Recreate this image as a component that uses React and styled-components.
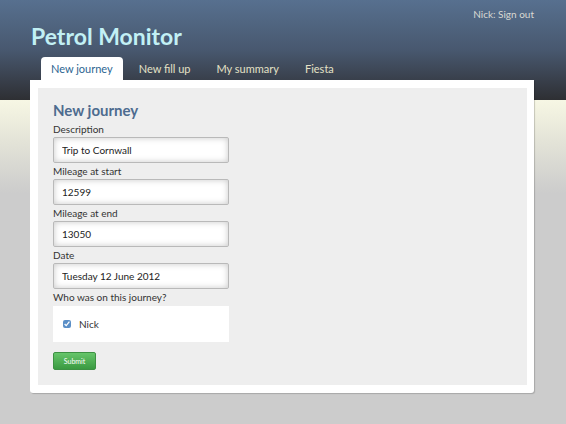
import React from 'react';
import styled, { createGlobalStyle } from 'styled-components';

const GlobalStyle = createGlobalStyle`
  html, body {
    margin: 0;
    padding: 0;
  }
  body {
    min-height: 424px;
    font-family: Lato, "Open Sans", sans-serif;
    color: #333;
    background: linear-gradient(
      to bottom,
      #57708f 0px,
      #48586f 50px,
      #2e2f33 100px,
      #f7f7e4 100px,
      #e4e4d8 140px,
      #cccccc 193px,
      #cccccc 100%
    ) no-repeat;
    background-color: #cccccc;
  }
`;

const Page = styled.div`
  width: 504px;
  margin-left: 30px;
`;

const Header = styled.header`
  height: 80px;
  display: flex;
  flex-direction: column;
`;

const UserBar = styled.div`
  display: flex;
  justify-content: flex-end;
  padding-top: 8px;
  font-size: 10px;
  line-height: 12px;
  color: #d9d9d2;
`;

const Title = styled.h1`
  margin: 2px 0 0 1px;
  font-size: 23px;
  line-height: 28px;
  font-weight: 700;
  color: #c2f0f5;
`;

const Tabs = styled.nav`
  margin-top: auto;
  padding-left: 11px;
  display: flex;
  gap: 6px;
`;

const Tab = styled.a`
  height: 23px;
  padding: 0 10px;
  display: flex;
  align-items: center;
  font-size: 11px;
  color: ${p => (p.$active ? '#2d6591' : '#e4e1c6')};
  background: ${p => (p.$active ? '#ffffff' : 'transparent')};
  border-radius: 4px 4px 0 0;
  text-decoration: none;
  cursor: pointer;
`;

const Card = styled.main`
  background: #ffffff;
  padding: 8px 7px 8px 8px;
  border-radius: 0 0 3px 3px;
  box-shadow: 1px 1px 1px rgba(0, 0, 0, 0.18);
`;

const Panel = styled.section`
  background: #eeeeee;
  padding: 12px 15px 15px;
`;

const Heading = styled.h2`
  margin: 0 0 1px;
  font-size: 15px;
  line-height: 20px;
  font-weight: 700;
  color: #4d6b8f;
`;

const Field = styled.div`
  display: flex;
  flex-direction: column;
  width: 176px;
`;

const Label = styled.label`
  font-size: 10px;
  line-height: 16px;
  color: #333;
`;

const Input = styled.input`
  box-sizing: border-box;
  width: 176px;
  height: 26px;
  margin: 0;
  padding: 0 8px;
  border: 1px solid #b9b9b9;
  border-radius: 2px;
  background: #ffffff;
  box-shadow: inset 0 0 6px rgba(0, 0, 0, 0.22);
  font-family: Lato, "Open Sans", sans-serif;
  font-size: 10px;
  color: #222;
  outline: none;
`;

const CheckBox = styled.div`
  box-sizing: border-box;
  width: 176px;
  height: 36px;
  margin-top: 1px;
  padding: 0 10px;
  background: #ffffff;
  display: flex;
  align-items: center;
  gap: 8px;
  font-size: 10px;
  color: #333;
  input {
    width: 8px;
    height: 8px;
    margin: 0;
    accent-color: #5b8fc7;
  }
`;

const Submit = styled.button`
  margin-top: 10px;
  width: 43px;
  height: 18px;
  padding: 0;
  border: 1px solid #3d9143;
  border-radius: 2px;
  background: linear-gradient(to bottom, #66c56a, #3a9a41);
  color: #ffffff;
  font-family: Lato, "Open Sans", sans-serif;
  font-size: 7px;
  cursor: pointer;
`;

const fields = [
  { label: 'Description', value: 'Trip to Cornwall' },
  { label: 'Mileage at start', value: '12599' },
  { label: 'Mileage at end', value: '13050' },
  { label: 'Date', value: 'Tuesday 12 June 2012' },
];

const tabs = ['New journey', 'New fill up', 'My summary', 'Fiesta'];

export default function App() {
  return (
    <>
      <GlobalStyle />
      <Page>
        <Header>
          <UserBar>Nick: Sign out</UserBar>
          <Title>Petrol Monitor</Title>
          <Tabs>
            {tabs.map((t, i) => (
              <Tab key={t} $active={i === 0}>{t}</Tab>
            ))}
          </Tabs>
        </Header>
        <Card>
          <Panel>
            <Heading>New journey</Heading>
            {fields.map(f => (
              <Field key={f.label}>
                <Label>{f.label}</Label>
                <Input defaultValue={f.value} readOnly />
              </Field>
            ))}
            <Field>
              <Label>Who was on this journey?</Label>
              <CheckBox>
                <input type="checkbox" defaultChecked />
                <span>Nick</span>
              </CheckBox>
            </Field>
            <Submit>Submit</Submit>
          </Panel>
        </Card>
      </Page>
    </>
  );
}
